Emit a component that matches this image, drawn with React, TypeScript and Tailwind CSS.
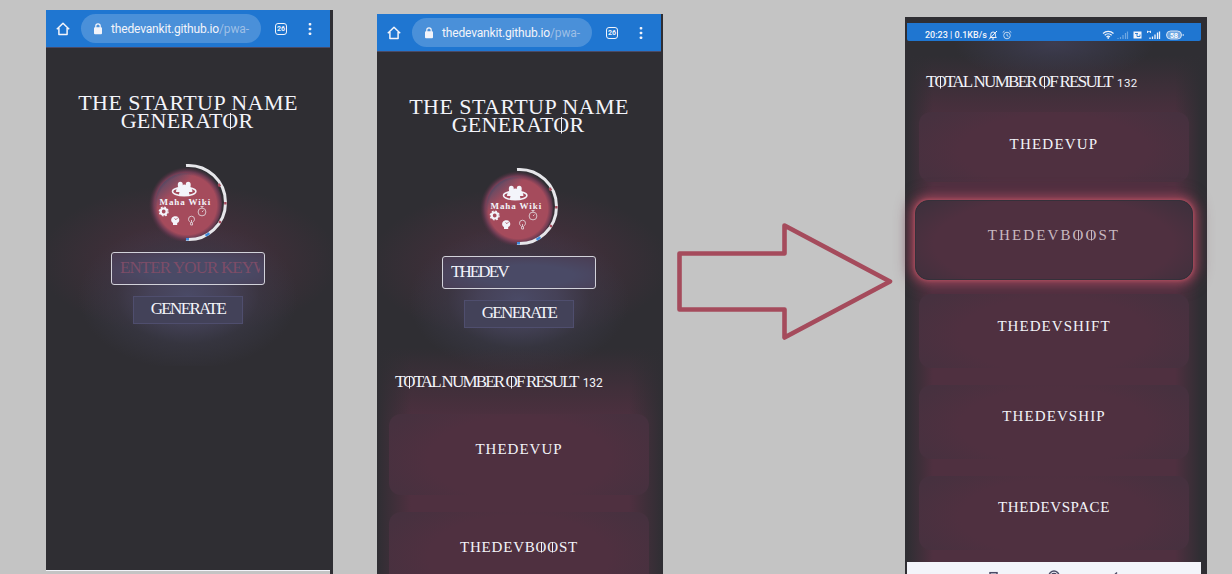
import React from "react";

const SERIF = "font-['Liberation_Serif',serif]";

/* Renders a lettered heading; every "0" marks an O struck through with a stem. */
function Runic({ text, className = "" }: { text: string; className?: string }) {
  return (
    <span className={`${SERIF} whitespace-nowrap ${className}`}>
      {text.split(/(0)/).map((c, i) =>
        c === "0" ? (
          <span
            key={i}
            className="bg-[linear-gradient(currentColor,currentColor)] bg-[length:1px_66%] bg-[position:0.340em_62%] bg-no-repeat"
          >
            O
          </span>
        ) : (
          c
        ),
      )}
    </span>
  );
}

function BrowserBar() {
  return (
    <div className="flex h-[38px] items-center border-b border-[#4a4a66] bg-[#1f76d1] text-[#f3f4fa]">
      <svg className="ml-[10px] h-[14px] w-[14px]" viewBox="0 0 14 14" fill="none" stroke="currentColor" strokeWidth="1.500">
        <path d="M.8 7.200 7 1.200l6.200 6M2.900 6v6.600h8.200V6" strokeLinejoin="round" />
      </svg>
      <div className="ml-[11px] flex h-[29px] w-[180px] items-center rounded-full bg-[#4a90d9]">
        <svg className="ml-[12px] h-[12px] w-[10px]" viewBox="0 0 10 12" fill="currentColor">
          <rect x="1" y="4.200" width="8" height="7" rx="1" />
          <path d="M2.800 5V3a2.200 2.200 0 0 1 4.400 0v2" fill="none" stroke="currentColor" strokeWidth="1.200" />
        </svg>
        <div className="ml-[8px] whitespace-nowrap font-[Roboto,sans-serif] text-[12px] leading-[16px] tracking-[-0.160px]">
          <span>thedevankit.github.io</span>
          <span className="text-[#9dbfe6]">/pwa-</span>
        </div>
      </div>
      <div className="ml-[14px] flex h-[12px] w-[12px] items-center justify-center rounded-[3px] border-[1.500px] border-current pt-px font-[Roboto,sans-serif] text-[7px] font-bold leading-[7px]">
        26
      </div>
      <svg className="ml-[21px] h-[14px] w-[4px]" viewBox="0 0 4 14" fill="currentColor">
        <rect x="0.700" y="1" width="2.600" height="2.600" rx="0.800" />
        <rect x="0.700" y="5.700" width="2.600" height="2.600" rx="0.800" />
        <rect x="0.700" y="10.400" width="2.600" height="2.600" rx="0.800" />
      </svg>
    </div>
  );
}

function Logo() {
  return (
    <svg className="block h-[86px] w-[86px]" viewBox="0 0 86 86">
      <defs>
        <radialGradient id="disc" cx="0.540" cy="0.520" r="0.500">
          <stop offset="0.780" stopColor="#a54b5c" />
          <stop offset="0.880" stopColor="#6b3b52" />
          <stop offset="1" stopColor="#4f3040" stopOpacity="0" />
        </radialGradient>
        <linearGradient id="shade" x1="0" y1="0" x2="0.550" y2="0.600">
          <stop offset="0.150" stopColor="#4a4a66" />
          <stop offset="0.550" stopColor="#4a4a66" stopOpacity="0" />
        </linearGradient>
      </defs>
      <circle cx="39" cy="43.500" r="38" fill="url(#disc)" />
      <circle cx="41" cy="44" r="31" fill="url(#shade)" />
      <path d="M41 5.500a37.080 37.080 0 1 1 0 74" fill="none" stroke="#e6e6ea" strokeWidth="3" />
      <path d="m73.500 24 1.500 2.500M80.400 42v2.500M75.500 61l-1.200 2" fill="none" stroke="#a54b5c" strokeWidth="2.500" />
      <path d="m64.500 73.200-4 2.500M44 79.300h-3" fill="none" stroke="#3f8bdc" strokeWidth="2.400" />
      <g fill="#f3f4fa">
        <ellipse cx="39.200" cy="31.500" rx="11.700" ry="4.200" fill="none" stroke="#f3f4fa" strokeWidth="1.500" />
        <ellipse cx="35.300" cy="25" rx="2.500" ry="3.300" />
        <ellipse cx="43.200" cy="25" rx="2.500" ry="3.300" />
        <path d="M31 32c0-3.500 1.500-5 3.700-5h9c2.300 0 3.700 1.500 3.700 5z" />
        <path d="M34 35.500c0-5 2-6.500 5.200-6.500s5.200 1.500 5.200 6.500z" />
        <circle cx="39.200" cy="27" r="2.500" />
      </g>
      <text x="14.500" y="44.500" fill="#f3f4fa" fontFamily="Liberation Serif, serif" fontWeight="700" fontSize="9" letterSpacing="0.900">
        Maha Wiki
      </text>
      <circle cx="18.700" cy="51.500" r="3" fill="none" stroke="#f3f4fa" strokeWidth="2.200" />
      <circle cx="18.700" cy="51.500" r="4.400" fill="none" stroke="#f3f4fa" strokeWidth="1.300" strokeDasharray="1.800 1.650" />
      <g fill="none" stroke="#d9c3ca" strokeWidth="1">
        <circle cx="57" cy="52" r="3.900" />
        <path d="M55.500 46.500h3M57 46.500v1.800M57 52l1.500-1.500" />
        <path d="M45.500 62.500c-1.500-1.300-2-2.200-2-3.300a3 3 0 0 1 6 0c0 1.100-.6 2-2 3.300v2.500h-1.800zM46.500 60v3" />
      </g>
      <path d="M28 65v-2c-2-1-2.300-3.500-1.300-5 1.300-2 5-2.300 6.600-.6 1.400 1.500 1.200 3.600.2 4.900l-1.300.8V65h-4.200z" fill="#f3f4fa" />
      <path d="m29.500 58.500 1.500 1.200 1.800-2" stroke="#a54b5c" strokeWidth="0.800" fill="none" />
    </svg>
  );
}

function Generator({ typed }: { typed?: string }) {
  return (
    <div className="flex h-[318px] w-[284px] flex-col items-center bg-[radial-gradient(ellipse_110px_74px_at_142px_248px,#4a4a66_0%,#47465fcc_35%,#3b3a4988_65%,transparent_100%),radial-gradient(ellipse_150px_76px_at_142px_212px,#4f304099_35%,transparent_100%)] pt-[46px] text-[#f3f4fa]">
      <div className="flex w-full flex-col items-center text-[22px] leading-[18px]">
        <Runic text="THE STARTUP NAME" className="tracking-[0.450px]" />
        <Runic text="GENERAT0R" className="pr-[2px] tracking-[0.250px]" />
      </div>
      <div className="mt-[30px] pr-[0px]">
        <Logo />
      </div>
      <div className="mt-[6px] flex h-[33px] w-[154px] items-center rounded-[3px] border border-[#d2d2da] bg-[radial-gradient(ellipse_at_55%_60%,#4a4a66_40%,#4a3b50_100%)] pb-[3px]">
        <div className="ml-[8px] h-[20px] w-[140px] overflow-hidden text-[17px] leading-[20px]">
          {typed ? (
            <Runic text={typed} className="tracking-[-1.900px]" />
          ) : (
            <Runic text="ENTER YOUR KEYW" className="tracking-[-0.900px] text-[#7d4d68]" />
          )}
        </div>
      </div>
      <div className="mt-[11px] flex h-[28px] w-[110px] items-center justify-center border border-[#4f4e6e] bg-[#434259] pb-[2px]">
        <Runic text="GENERATE" className="text-[17px] leading-[20px] tracking-[-1.650px]" />
      </div>
    </div>
  );
}

function Total({ className, count }: { className: string; count: string }) {
  return (
    <div className="flex items-baseline text-[#f3f4fa]">
      <Runic text="T0TAL NUMBER 0F RESULT" className={`text-[17px] leading-[20px] ${className}`} />
      <span className={`ml-[5px] font-[Roboto,sans-serif] leading-[14px] ${count}`}>132</span>
    </div>
  );
}

const CARD =
  "flex justify-center rounded-[12px] bg-[radial-gradient(ellipse_58%_85%_at_50%_55%,#4f3040_60%,#46313f_100%)] text-[15px] leading-[18px]";

function StatusBar() {
  return (
    <div className="ml-[2px] flex h-[18px] w-[294px] items-center rounded-b-[2px] bg-[#1f76d1] pl-[18px] pr-[17px] pt-[5px] font-[Roboto,sans-serif] text-[9px] font-medium leading-[12px] text-[#f3f4fa]">
      <span className="w-[62px] whitespace-nowrap">20:23 | 0.1KB/s</span>
      <svg className="ml-[1px] h-[10px] w-[10px]" viewBox="0 0 10 10" fill="none" stroke="currentColor" strokeWidth="1">
        <path d="M2 7.500c1-1 .8-2 .8-3.200a2.300 2.300 0 0 1 4.600 0c0 1.200 0 2.200.9 3.200zM4 9h2M1 9.300 9 1" />
      </svg>
      <svg className="ml-[4px] h-[10px] w-[10px]" viewBox="0 0 10 10" fill="none" stroke="#c5d9f1" strokeWidth="1">
        <circle cx="5" cy="5.500" r="3.300" />
        <path d="M5 3.800v2l1.400.5M.7 2.500 2.500 1M9.300 2.500 7.500 1" />
      </svg>
      <svg className="ml-auto h-[10px] w-[82px]" viewBox="0 0 82 10">
        <g fill="none" stroke="#f3f4fa" strokeWidth="1.200">
          <path d="M1 3.500c3-2.800 7.500-2.800 10.500 0M2.700 5.300c2-1.900 5-1.900 7 0M4.500 7c1-.9 2.500-.9 3.500 0M6.200 7v2" />
          <rect x="31.500" y="1.500" width="8" height="7" fill="#f3f4fa" stroke="none" />
          <path d="M33 3.500h3M35 3.500v3h3v-2" stroke="#1f76d1" strokeWidth="0.900" />
          <path d="M45.500 3V1l1.500 1 1.500-1v2" strokeWidth="0.900" />
        </g>
        <path d="M16 9V8M18.500 9V7M21 9V5M23.500 9V3M25.500 9V1.500" stroke="#6ea7e2" strokeWidth="1.200" />
        <path d="M48 9V7.500M50.500 9V6.500M53 9V4.500M55.500 9V2.500M57.500 9V1.500" stroke="#f3f4fa" strokeWidth="1.300" />
        <rect x="64.500" y="1" width="15" height="8" rx="4" fill="#6ea7e2" stroke="#d0e0f4" />
        <path d="M81.200 4v2" stroke="#d0e0f4" />
        <text x="72" y="7.700" textAnchor="middle" fontFamily="Roboto, sans-serif" fontWeight="700" fontSize="7" fill="#ffffff">
          58
        </text>
      </svg>
    </div>
  );
}

function ResultsPhone() {
  return (
    <div className="mt-[17px] flex h-[557px] w-[302px] flex-col bg-[#2f2e33] pt-[6px] text-[#f3f4fa]">
      <StatusBar />
      <div className="ml-[2px] flex h-[521px] w-[294px] flex-col bg-[radial-gradient(ellipse_100px_38px_at_147px_2px,#3d3c50_0%,transparent_100%),linear-gradient(90deg,#2f2e33_0px,transparent_26px,transparent_268px,#2f2e33_294px),linear-gradient(#2f2e33_15px,#4f3040_85px,#4f3040_100%)] px-[12px]">
        <div className="h-[71px] pl-[7px] pt-[31px]">
          <Total className="tracking-[-1.700px]" count="text-[11.500px] tracking-[0.500px]" />
        </div>
        <div className={`${CARD} h-[70px] pt-[23px]`}>
          <Runic text="THEDEVUP" className="tracking-[1.200px]" />
        </div>
        <div className="-mx-[4px] mt-[18px] flex h-[80px] justify-center rounded-[14px] border border-[#35303a] bg-[radial-gradient(ellipse_62%_85%_at_50%_55%,#4f3040_70%,#3d303c_100%)] pt-[25px] text-[15px] leading-[18px] text-[#c9b9c0] shadow-[0_0_3px_1px_#a54b5c,0_0_10px_3px_#a54b5ccc,0_0_16px_4px_#6b3649]">
          <Runic text="THEDEVB00ST" className="tracking-[2.100px]" />
        </div>
        <div className={`${CARD} mt-[14px] h-[74px] pt-[23px]`}>
          <Runic text="THEDEVSHIFT" className="tracking-[1.050px]" />
        </div>
        <div className={`${CARD} mt-[17px] h-[74px] pt-[22px]`}>
          <Runic text="THEDEVSHIP" className="tracking-[1.100px]" />
        </div>
        <div className={`${CARD} mt-[17px] h-[74px] pt-[22px]`}>
          <Runic text="THEDEVSPACE" className="tracking-[0.600px]" />
        </div>
      </div>
      <div className="ml-[2px] h-[12px] w-[294px] bg-[#f3f4fa]">
        <svg className="block h-[12px] w-[294px]" viewBox="0 0 294 12" fill="none" stroke="#4a4a66" strokeWidth="1.500">
          <rect x="83" y="10.700" width="7" height="7" />
          <circle cx="147" cy="14" r="5" />
          <circle cx="147" cy="14" r="2.500" />
          <path d="m210 10.500-4 4" />
        </svg>
      </div>
    </div>
  );
}

export default function App() {
  return (
    <div className="flex h-[574px] w-[1232px] items-start overflow-hidden bg-[#c4c4c4] pl-[46px]">
      <div className="mt-[10px] flex h-[564px] w-[287px] shrink-0 bg-[linear-gradient(90deg,transparent_284px,#2f2e33_284px)]">
        <div className="h-[561px] w-[284px] border-b border-[#f3f4fa] bg-[#2f2e33]">
          <BrowserBar />
          <Generator />
        </div>
      </div>

      <div className="ml-[44px] mt-[14px] h-[560px] w-[286px] shrink-0 bg-[#2f2e33]">
        <div className="w-[284px]">
          <BrowserBar />
        </div>
        <Generator typed="THEDEV" />
        <div className="-mt-[22px] h-[226px] w-[286px] bg-[linear-gradient(90deg,#2f2e33_0px,transparent_34px,transparent_252px,#2f2e33_286px),linear-gradient(transparent_0px,#4f3040_75px,#4f3040_100%)] pl-[12px] pr-[14px] text-[#f3f4fa]">
          <div className="h-[66px] pl-[6px] pt-[24px]">
            <Total className="tracking-[-1.850px]" count="text-[12px]" />
          </div>
          <div className={`${CARD} h-[81px] pt-[26px]`}>
            <Runic text="THEDEVUP" className="tracking-[1px]" />
          </div>
          <div className="mt-[17px] h-[62px] overflow-hidden">
            <div className={`${CARD} h-[81px] pt-[26px]`}>
              <Runic text="THEDEVB00ST" className="tracking-[0.800px]" />
            </div>
          </div>
        </div>
      </div>

      <svg className="mt-[210px] block h-[140px] w-[242px] shrink-0" viewBox="0 0 242 140">
        <path
          d="M16.500 43.500h105v-28l105.500 56-105.500 56v-28h-105z"
          fill="none"
          stroke="#a54b5c"
          strokeWidth="4.600"
          strokeLinejoin="round"
        />
      </svg>

      <ResultsPhone />
    </div>
  );
}
